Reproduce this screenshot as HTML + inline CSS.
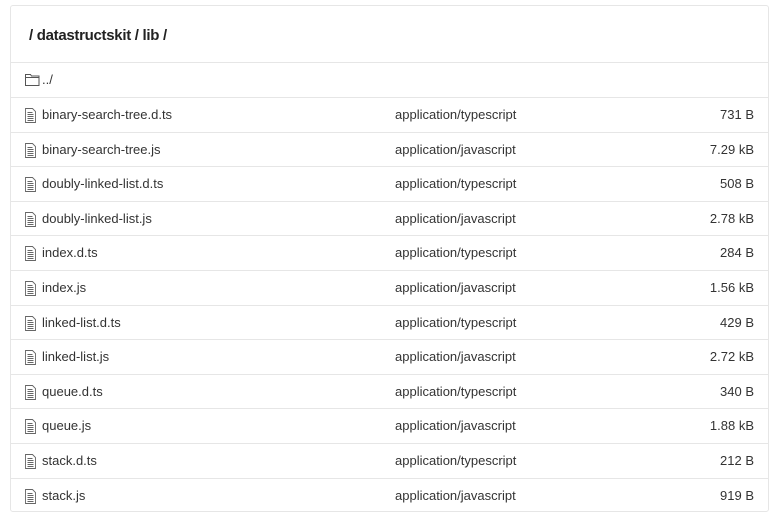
<!DOCTYPE html><html><head><style>
body{margin:0;background:#fff;font-family:"Liberation Sans",sans-serif;color:#333;}
.box{position:absolute;left:10px;top:5px;width:759px;height:507px;border:1px solid #e6e6e6;border-radius:3px;box-sizing:border-box}
h1{position:absolute;left:18px;top:21px;margin:0;font-size:15px;font-weight:bold;color:#222;letter-spacing:-0.3px}
.row{position:absolute;left:0;width:757px;border-top:1px solid #e6e6e6;font-size:13px;line-height:34px;height:34px}
.n{position:absolute;left:31px}.m{position:absolute;left:384px}.s{position:absolute;right:14px}
svg{position:absolute;left:14px;top:10px}
</style></head><body><div class="box">
<h1>/ datastructskit / lib /</h1>
<div class="row" style="top:56px;height:35px"><svg width="15" height="13" viewBox="0 0 15 13"><path d="M0.5 1.5h5l1 1.5h7.5v9.5h-13.5z M0.5 4.5h14" fill="none" stroke="#555"/></svg><span class="n" style="left:31px">../</span></div>
</div>
<script>
const d=[["binary-search-tree.d.ts","typescript","731 B"],["binary-search-tree.js","javascript","7.29 kB"],["doubly-linked-list.d.ts","typescript","508 B"],["doubly-linked-list.js","javascript","2.78 kB"],["index.d.ts","typescript","284 B"],["index.js","javascript","1.56 kB"],["linked-list.d.ts","typescript","429 B"],["linked-list.js","javascript","2.72 kB"],["queue.d.ts","typescript","340 B"],["queue.js","javascript","1.88 kB"],["stack.d.ts","typescript","212 B"],["stack.js","javascript","919 B"]];
const b=document.querySelector('.box');
d.forEach((r,i)=>{const e=document.createElement('div');e.className='row';e.style.top=(91+i*34.6)+'px';
e.innerHTML='<svg width="11" height="15" viewBox="0 0 11 15"><path d="M0.5 0.5h7l3 3v11h-10z M2.5 4.5h5 M2.5 6.5h6 M2.5 8.5h6 M2.5 10.5h6 M2.5 12.5h6" fill="none" stroke="#666" stroke-width="0.9"/></svg><span class="n">'+r[0]+'</span><span class="m">application/'+r[1]+'</span><span class="s">'+r[2]+'</span>';b.appendChild(e)});
</script></body></html>
